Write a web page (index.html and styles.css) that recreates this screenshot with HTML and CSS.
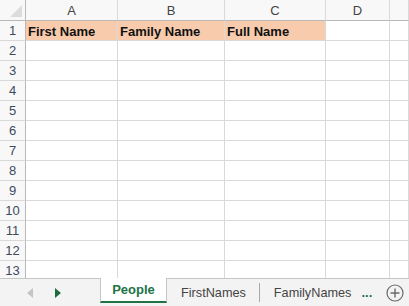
FILE: index.html
```html
<!DOCTYPE html>
<html>
<head>
  <title>People</title>
  <link rel="stylesheet" href="styles.css">
</head>
<body>
  <div class="sheet">
    <div class="hd corner"><span class="tri"></span></div>
    <div class="hd col">A</div>
    <div class="hd col">B</div>
    <div class="hd col">C</div>
    <div class="hd col">D</div>
    <div class="hd col"></div>

    <div class="hd row">1</div>
    <div class="cell title">First Name</div>
    <div class="cell title">Family Name</div>
    <div class="cell title">Full Name</div>
    <div class="cell"></div>
    <div class="cell"></div>

    <div class="hd row">2</div><div class="cell"></div><div class="cell"></div><div class="cell"></div><div class="cell"></div><div class="cell"></div>
    <div class="hd row">3</div><div class="cell"></div><div class="cell"></div><div class="cell"></div><div class="cell"></div><div class="cell"></div>
    <div class="hd row">4</div><div class="cell"></div><div class="cell"></div><div class="cell"></div><div class="cell"></div><div class="cell"></div>
    <div class="hd row">5</div><div class="cell"></div><div class="cell"></div><div class="cell"></div><div class="cell"></div><div class="cell"></div>
    <div class="hd row">6</div><div class="cell"></div><div class="cell"></div><div class="cell"></div><div class="cell"></div><div class="cell"></div>
    <div class="hd row">7</div><div class="cell"></div><div class="cell"></div><div class="cell"></div><div class="cell"></div><div class="cell"></div>
    <div class="hd row">8</div><div class="cell"></div><div class="cell"></div><div class="cell"></div><div class="cell"></div><div class="cell"></div>
    <div class="hd row">9</div><div class="cell"></div><div class="cell"></div><div class="cell"></div><div class="cell"></div><div class="cell"></div>
    <div class="hd row">10</div><div class="cell"></div><div class="cell"></div><div class="cell"></div><div class="cell"></div><div class="cell"></div>
    <div class="hd row">11</div><div class="cell"></div><div class="cell"></div><div class="cell"></div><div class="cell"></div><div class="cell"></div>
    <div class="hd row">12</div><div class="cell"></div><div class="cell"></div><div class="cell"></div><div class="cell"></div><div class="cell"></div>
    <div class="hd row">13</div><div class="cell"></div><div class="cell"></div><div class="cell"></div><div class="cell"></div><div class="cell"></div>
  </div>

  <div class="tabs">
    <div class="nav">
      <span class="arrow prev"></span>
      <span class="arrow next"></span>
    </div>
    <div class="tab active">People</div>
    <div class="tab">FirstNames</div>
    <div class="tab last">FamilyNames</div>
    <div class="more">...</div>
    <div class="add">
      <svg width="18" height="18" viewBox="0 0 18 18">
        <circle cx="9" cy="9" r="8" fill="none" stroke="#6a6a6a" stroke-width="1.2"/>
        <path d="M9 4.5v9M4.5 9h9" stroke="#6a6a6a" stroke-width="1.4"/>
      </svg>
    </div>
  </div>
</body>
</html>
```

FILE: styles.css
```css
body {
  margin: 0;
  padding: 0;
  width: 409px;
  height: 306px;
  overflow: hidden;
  font-family: "Liberation Sans", Arial, sans-serif;
  font-size: 13px;
  background-color: #fff;
}

.sheet {
  display: grid;
  grid-template-columns: 26px 92px 107px 101px 64px 1fr;
  grid-template-rows: 21px;
  grid-auto-rows: 20px;
  height: 278px;
  overflow: hidden;
}

.sheet > div {
  box-sizing: border-box;
  border-right: 1px solid #d9d9d9;
  border-bottom: 1px solid #d9d9d9;
}

.hd {
  background-color: #f8f8f8;
  color: #444;
  display: flex;
  align-items: center;
  justify-content: center;
}

.sheet > .col {
  border-bottom-color: #b8b8b8;
}

.sheet > .row {
  border-right-color: #b8b8b8;
  color: #3d4a5c;
}

.sheet > .corner {
  position: relative;
  border-color: #b8b8b8;
}

.tri {
  position: absolute;
  right: 3px;
  bottom: 3px;
  width: 0;
  height: 0;
  border-left: 12px solid transparent;
  border-bottom: 12px solid #dcdcdc;
}

.cell {
  display: flex;
  align-items: center;
  padding-left: 2px;
  padding-top: 1px;
}

.title {
  background-color: #f8cbad;
  font-weight: bold;
  color: #111;
}

.tabs {
  display: flex;
  align-items: stretch;
  height: 28px;
  box-sizing: border-box;
  border-top: 1px solid #c6c6c6;
  background-color: #f3f3f3;
  color: #444;
}

.nav {
  width: 100px;
  display: flex;
  align-items: center;
  padding-left: 27px;
  box-sizing: border-box;
  gap: 22px;
}

.arrow {
  width: 0;
  height: 0;
  border-top: 5px solid transparent;
  border-bottom: 5px solid transparent;
}

.prev {
  border-right: 6px solid #c4c4c4;
}

.next {
  border-left: 6px solid #1e6b3f;
}

.tab {
  display: flex;
  align-items: center;
  padding: 0 13px 0 14px;
  font-size: 12.7px;
}

.tab.active {
  width: 67px;
  box-sizing: border-box;
  justify-content: center;
  margin-top: -1px;
  padding: 0;
  background-color: #fff;
  border-left: 1px solid #c6c6c6;
  border-right: 1px solid #c6c6c6;
  border-bottom: 2px solid #217346;
  font-size: 13px;
  font-weight: bold;
  color: #217346;
  height: 25px;
}

.tab.last {
  border-left: 1px solid #a8a8a8;
  margin: 4px 0;
  padding: 0 10px 0 14px;
}

.more {
  display: flex;
  align-items: center;
  color: #217346;
  font-weight: bold;
}

.add {
  display: flex;
  align-items: center;
  margin-left: 14px;
}
```
